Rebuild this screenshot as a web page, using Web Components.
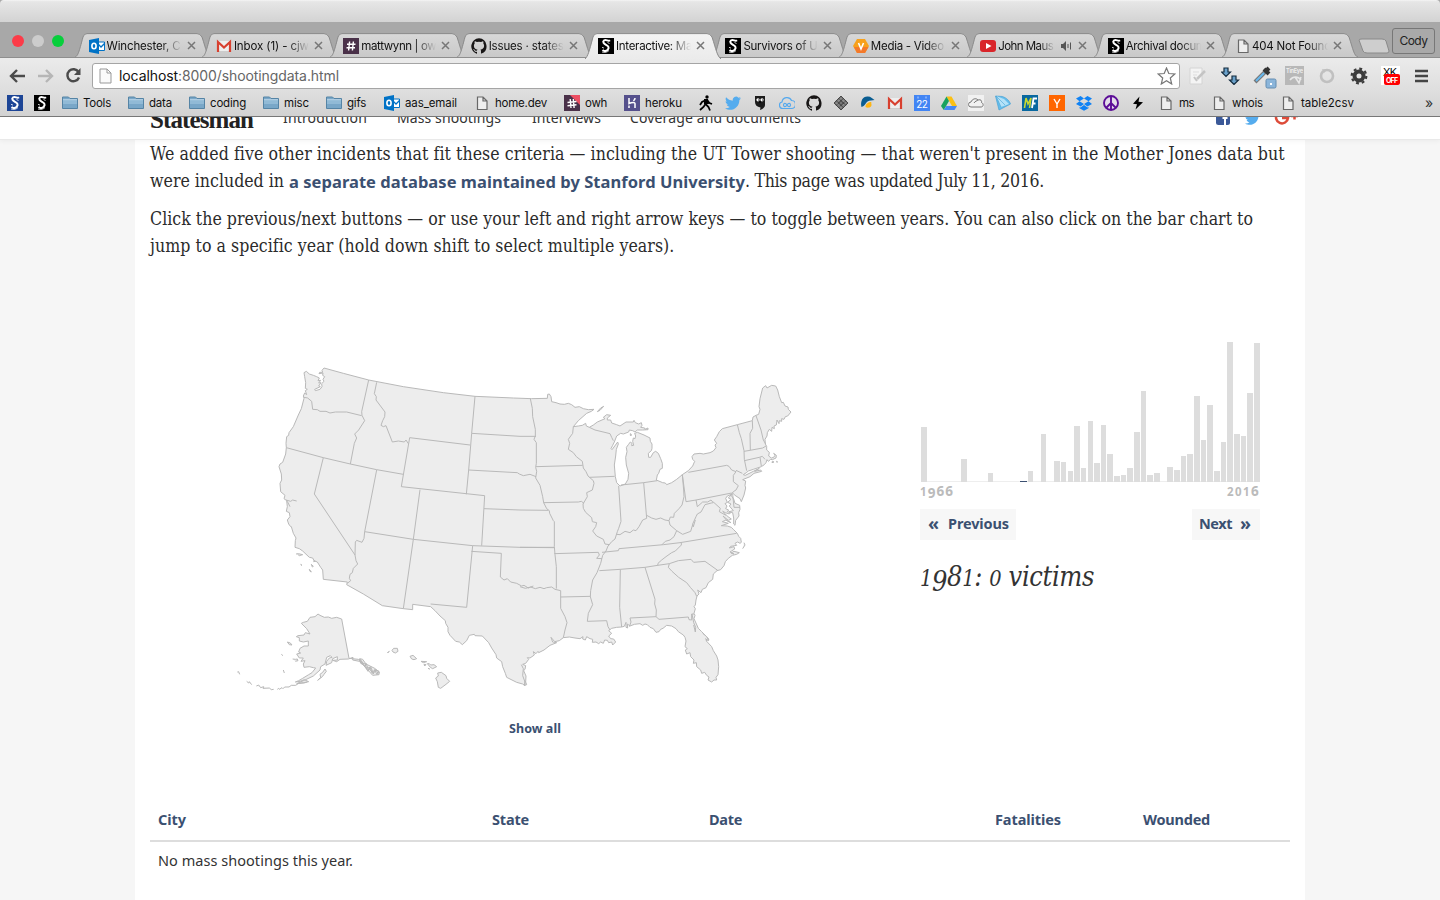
<!DOCTYPE html>
<html lang="en"><head><meta charset="utf-8"><title>Interactive: Mass shootings</title>
<style>
html,body{margin:0;height:100%}
body{display:flex;flex-direction:column;height:900px;overflow:hidden;background:#f6f6f6;font-family:Inter,"Liberation Sans",sans-serif}
</style></head><body>
<browser-chrome></browser-chrome>
<news-page></news-page>
<script>
const define=(name,css,html,after)=>customElements.define(name,class extends HTMLElement{
  connectedCallback(){
    if(this.shadowRoot)return;
    const r=this.attachShadow({mode:'open'});
    r.innerHTML='<style>'+css+'</style>'+(typeof html==='function'?html(this):html);
    if(after)after(this,r);
  }
});

/* Spreads its text over the width given in the w attribute. */
define('fit-text',':host{display:inline-block;white-space:pre;flex:none}','<slot></slot>',el=>{
  const w=+el.getAttribute('w'),n=el.textContent.length;
  const now=el.getBoundingClientRect().width;
  el.style.letterSpacing=((w-now)/n).toFixed(3)+'px';
});

const S='<path d="M12 2.300C10 4 8.500 1 6.200 2.300 4 4 6 5.800 8 6.800c2.700 1.300 3.300 3 1.800 4.900-1.400 1.700-3.700 1.500-5.300.3" fill="none" stroke="#fff" stroke-width="2"/><path d="M4 14c2.500.8 5.500.3 7-1.500M9.500 4.500l2 1M4 9.300l2 .8" fill="none" stroke="#fff" stroke-width=".8"/>';
const ICONS={
 sblack:'<path d="M0 0h16v16H0z"/>'+S,
 sblue:'<path fill="#1d4596" d="M0 0h16v16H0z"/>'+S,
 outlook:'<path fill="#fff" stroke="#0072c6" d="M8 4h7.5v8.5H8z"/><path d="M9 6l3 3 4-4" fill="none" stroke="#0072c6" stroke-width="1.3"/><path fill="#0072c6" d="M0 2l10-2v16L0 14z"/><ellipse cx="5" cy="8" rx="2.1" ry="2.8" fill="none" stroke="#fff" stroke-width="1.6"/>',
 gmail:'<path fill="#eee" d="M1 3h14v11H1z"/><path d="M1 13.5h14" stroke="#ccc"/><path fill="none" stroke="#d8402f" stroke-width="2.2" d="M2 14V4l6 5.5L14 4v10"/>',
 slack:'<path fill="#4a3149" d="M0 0h16v16H0z"/><path d="M6.6 3.5l-1 9M10.4 3.5l-1 9M4 6.3h8.5M3.5 9.8H12" stroke="#fff" stroke-width="1.4"/>',
 owh:'<path fill="#4a3149" d="M0 0h16v16H0z"/><path fill="#ed4f63" d="M6 0h10v10z"/><path d="M6.2 4l.8 9M9.3 4l.8 9M3.5 7.5l9-1M3.5 10.8l9-1" stroke="#fff" stroke-width="1.4"/>',
 github:'<path fill="#181616" d="M8 .2a8 8 0 0 0-2.5 15.5c.4.1.5-.2.5-.4v-1.5c-2.200.5-2.700-1-2.700-1-.4-.9-.9-1.200-.9-1.200-.7-.5.1-.5.1-.5.8.1 1.200.8 1.200.8.7 1.200 1.900.9 2.300.7.1-.5.300-.9.500-1.100-1.800-.2-3.600-.9-3.600-4 0-.9.300-1.600.8-2.100-.1-.2-.4-1 .1-2.100 0 0 .7-.2 2.200.8a7.500 7.500 0 0 1 4 0c1.500-1 2.200-.8 2.200-.8.4 1.100.2 1.900.1 2.100.5.6.8 1.300.8 2.100 0 3.100-1.900 3.800-3.700 4 .3.3.6.8.6 1.500v2.200c0 .2.1.5.5.4A8 8 0 0 0 8 .2z"/>',
 hex:'<path fill="#f7a11b" d="M4 1h8l4 7-4 7H4L0 8z"/><path fill="#f4792a" d="M1 9h14.500L12 15H4z"/><path d="M5.500 5L8 11l2.500-6" fill="none" stroke="#fff" stroke-width="1.600"/>',
 youtube:'<rect y="2" width="16" height="12" rx="3" fill="#d9252a"/><path fill="#fff" d="M6 5l5.500 3L6 11z"/>',
 file:'<path fill="#eee" stroke="#686868" stroke-width="1.200" d="M3.500 2h5.500l4 4v8.500H3.500zM9 2v4h4"/>',
 folder:'<path fill="#79a7c8" stroke="#5584a5" d="M.5 4V2h6l1.500 1.500h7.500v10H.5z"/><path fill="#91bad6" d="M1 5h14v4H1z"/><path d="M1 4.700h14" stroke="#bad5e8"/>',
 heroku:'<path fill="#55508c" d="M0 0h16v16H0z"/><path d="M5 3v5.500c3-1.500 6-1.500 6 0V13M11 3c0 1.500-.8 2-1.500 3M5 10.500v2.500" fill="none" stroke="#fff" stroke-width="1.500"/>',
 walk:'<circle cx="9" cy="2" r="1.700"/><path d="M8 4.500L7.500 9l3 3 1.500 3.500M7.500 9L5.500 12 2 15M8 5L4 7 2 10M9 5l2.500 3L14 9" fill="none" stroke="#000" stroke-width="1.800"/><path d="M6 4h4l1 5H6z"/>',
 twitter:'<path fill="#55acee" d="M16 3.200c-.6.300-1.200.4-1.900.5.700-.4 1.200-1 1.400-1.800-.6.400-1.300.6-2.100.8a3.300 3.300 0 0 0-5.600 3C5.100 5.600 2.700 4.300 1.100 2.300c-.9 1.500-.4 3.400 1 4.400-.5 0-1-.2-1.500-.4 0 1.600 1.100 2.900 2.600 3.200-.5.100-1 .2-1.500.1.400 1.300 1.600 2.200 3.100 2.300A6.600 6.600 0 0 1 0 13.200c6.500 4.100 14.400-.4 14.400-8.300.6-.4 1.200-1 1.600-1.700z"/>',
 owl:'<path fill="#1c1c1c" d="M3 1h10v9c0 2-2 4-5 5l.5-2.500C5 12 3 10 3 7z"/><circle cx="6" cy="4.800" r="1.600" fill="#fff"/><circle cx="10" cy="4.800" r="1.600" fill="#fff"/><path d="M6 5h.8M10 5h.8M8 6v2" stroke="#000" stroke-width="1.200"/>',
 cloudblue:'<path fill="none" stroke="#55a9ee" stroke-width="1.200" d="M4 13.500a3.300 3.300 0 0 1-1-6.500 5 5 0 0 1 9.500-1.500 4 4 0 0 1 0 8zM8 10c-1.500-2.500-3.500-1.800-3.500 0s2 2.500 3.500 0 3.500-1.800 3.500 0-2 2.500-3.500 0z"/>',
 grid:'<path fill="#777" stroke="#333" stroke-width=".8" d="M8 1l7 7-7 7-7-7zM5.700 3.400l7 7M3.400 5.700l7 7M10.300 3.400l-7 7M12.700 5.700l-7 7"/><path d="M8 3.500L12.500 8 8 12.500 3.500 8z" fill="none" stroke="#ccc" stroke-width=".8" stroke-dasharray="1 1"/>',
 bird:'<path fill="#0a5d91" d="M1.500 12C0 6 3 1 8 1.500c3 0 4 2 6.500 3.500-2 .5-5 0-7 1.500S5 11 1.500 12z"/><path fill="#fdb515" d="M5.500 12c0-3 2.500-5 6-5-1 1 1 2.500-.5 4.500-1.500 1.500-4 1.500-5.500.5z"/>',
 cal:'<path fill="#4285f4" d="M0 0h16v16H0z"/><path d="M4 1.500v2M12 1.500v2" stroke="#bcd3fb"/><text x="8" y="13" font-size="10" text-anchor="middle" fill="#fff" font-family="Roboto">22</text>',
 drive:'<path fill="#fbc013" d="M5.500 1.500h5L16 11h-5z"/><path fill="#19a15f" d="M5.500 1.500L8 6l-5.200 9L0 11z"/><path fill="#4688f4" d="M5.300 11H16l-2.500 4H2.800z"/>',
 cloudgrey:'<path fill="#f1f1f1" d="M0 0h16v16H0z"/><path fill="none" stroke="#777" d="M3 12a2.500 2.500 0 0 1 0-5c1-3 5-4.500 7-2 3-1 4 1 3.500 2.500C16 8.500 15.500 12 13 12zM6 8c1-2 3-2 4-3"/>',
 gem:'<path fill="#65bdeb" stroke="#49a2d4" stroke-width=".7" d="M.500 1l7 .5C12 3 14.500 6 15.500 9L4 15z"/><path fill="#b4e2f8" d="M1 1l8 3 5 5-8 3z"/><path d="M1 1l5 11M1 1l9 9" stroke="#49a2d4" stroke-width=".6"/>',
 mf:'<path fill="#0868a0" d="M0 0h16v16H0z"/><path d="M2.500 13L4 3l2 6 3-6-1.500 10" fill="none" stroke="#c8d830" stroke-width="1.600"/><path d="M10 13l1.500-9.500H15M10.500 8.500h3" fill="none" stroke="#fff" stroke-width="1.800"/>',
 y:'<path fill="#f60" d="M0 0h16v16H0z"/><path d="M5 4l3 5 3-5M8 8.500V13" fill="none" stroke="#fff" stroke-width="1.400"/>',
 dropbox:'<path fill="#0f82f5" d="M4.600 1L8 3.500 3.500 6.300 0 3.600zM11.400 1L8 3.500l4.500 2.800L16 3.600zM0 9l3.500-2.700L8 9.100l-3.400 2.500zM16 9l-3.500-2.700L8 9.100l3.400 2.500zM8 10l3.500 2.600 1-.6v1.200L8 15.800l-4.500-2.600V12l1 .6z"/>',
 peace:'<circle cx="8" cy="8" r="7" fill="#e4dcea" stroke="#5c0d97" stroke-width="1.900"/><path d="M8 1v14M8 8l-5 5M8 8l5 5" stroke="#5c0d97" stroke-width="1.900"/>',
 bolt:'<path d="M9.500 1.500L3 8.800l4 .4-1.500 5.300L13 7.200l-4.500-.4z"/>',
 fb:'<rect x="1" width="14" height="15" rx="2.500" fill="#3b5998"/><path d="M10 15V5.500C10 3.500 11 3 13 3.200M7.500 8h5" fill="none" stroke="#fff" stroke-width="2"/>'
};
const icon=(n,w=16)=>'<svg width="'+w+'" height="'+w+'" viewBox="0 0 16 16">'+ICONS[n]+'</svg>';

define('tab-item',`:host{display:block;width:127.4px;height:25px;flex:none;position:relative;font-size:11.500px;color:#111}
 .shape{position:absolute;left:0;top:0}
 .in{position:relative;display:flex;align-items:center;height:25px;padding-left:13.500px}
 .in svg{flex:none}.t{width:75px;margin-left:2px;overflow:hidden;white-space:nowrap;-webkit-mask-image:linear-gradient(90deg,#000 72%,transparent)}
 .x{margin-left:5px}`,
 el=>{const a=el.hasAttribute('active'),snd=el.hasAttribute('sound'),f=el.getAttribute('icon')==='file';
 return `<svg class="shape" width="140" height="26"><defs><linearGradient id="g" x2="0" y2="1"><stop stop-color="${a?'#f3f3f3':'#d8d8d8'}"/><stop offset="1" stop-color="${a?'#ebebeb':'#c9c9c9'}"/></linearGradient></defs><path d="M0 ${a?26:24}C3 23 4 19 8 4Q9 .6 12 .6H122Q125 .6 127 4C131 16 132 23 136 ${a?26:24}" fill="url(#g)" stroke="#8a8a8a"/></svg>
 <div class="in">${icon(el.getAttribute('icon'))}<div class="t" style="${f?'margin-left:1px;width:76px':''}${snd?'width:57px':''}"><fit-text w="${el.getAttribute('w')}">${el.getAttribute('label')}</fit-text></div>
 ${snd?'<svg style="margin-left:6px" width="11" height="10"><path d="M0 3h2l3-3v10L2 7H0z" fill="#555"/><path d="M7 3v4M9.500 1.500v7" stroke="#555"/></svg>':''}
 <svg class="x" style="${snd?'margin-left:6px':''}" width="9" height="9"><path d="M1 1l7 7M8 1L1 8" stroke="#777" stroke-width="1.500"/></svg></div>`});

define('book-mark',':host{display:flex;align-items:center;flex:none;font-size:11.500px;color:#111}svg{flex:none}fit-text{margin-left:5px}',
 el=>{const l=el.getAttribute('label');return icon(el.getAttribute('icon'))+(l?`<fit-text w="${el.getAttribute('w')}">${l}</fit-text>`:'')},
 el=>{el.style.width=el.getAttribute('slotw')+'px'});

const TABS=[['outlook','Winchester, C',74],['gmail','Inbox (1) - cjw',75],['slack','mattwynn | ow',75],['github','Issues · states',75],['sblack','Interactive: Ma',76],['sblack','Survivors of U',74],['hex','Media - Video',73],['youtube','John Maus',55],['sblack','Archival docum',80],['file','404 Not Found',79]];
const MARKS=[[7,'sblue'],[34,'sblack'],[62,'folder','Tools',28],[128,'folder','data',23],[189,'folder','coding',36],[263,'folder','misc',25],[326,'folder','gifs',19],[384,'outlook','aas_email',52],[474,'file','home.dev',52],[564,'owh','owh',22],[624,'heroku','heroku',37],[698,'walk'],[725,'twitter'],[752,'owl'],[779,'cloudblue'],[806,'github'],[833,'grid'],[860,'bird'],[887,'gmail'],[914,'cal'],[941,'drive'],[968,'cloudgrey'],[995,'gem'],[1022,'mf'],[1049,'y'],[1076,'dropbox'],[1103,'peace'],[1130,'bolt'],[1158,'file','ms',15],[1211,'file','whois',31],[1280,'file','table2csv',53],[1425]];

define('browser-chrome',`:host{display:block;height:117px;flex:none;box-sizing:border-box;border-bottom:1px solid #777;background:#a8a8a8}
 .title{height:22px;border-radius:4px 4px 0 0;background:linear-gradient(#f5f5f5,#e6e6e6 8%,#d3d3d3)}
 .tabs{display:flex;height:36px;box-sizing:border-box;padding:11px 0 0 12px;border-bottom:1px solid #8e8e8e}
 .tabs tab-item[active]{z-index:2}
 .lights{width:63px;display:flex;gap:8px;padding-top:2px}.lights i{width:12px;height:12px;border-radius:50%}
 .new{margin:5px 0 0 9px;flex:none}
 .cody{margin:-5px 0 0 2px;width:41px;height:24px;border:1px solid #777;border-radius:3px;background:#a9a9a9;font:12px/24px Inter;text-align:center;color:#222;flex:none}
 .tools{display:flex;height:33px;align-items:center;background:linear-gradient(#ebebeb,#dedede);padding:2px 0 0 9px;box-sizing:border-box}
 .url{width:1086px;height:24px;margin-left:10px;border:1px solid #a5a5a5;border-radius:3px;background:#fff;display:flex;align-items:center;font-size:14px;color:#666;flex:none}
 .url svg{margin-left:5px}.url .u{margin-left:5px;flex:1}.url b{font-weight:400;color:#111}.star{margin-right:3px}
 .ext{display:flex;align-items:center;gap:12px;margin-left:9px;height:25px}
 .marks{display:flex;height:25px;align-items:center;padding:0 0 2px 7px;box-sizing:border-box;background:linear-gradient(#dedede,#d2d2d2)}
 svg{flex:none}.more{font-size:14px;color:#333}`,
 ()=>`<div class="title"></div>
 <div class="tabs"><div class="lights"><i style="background:#fc3b48"></i><i style="background:#ccc"></i><i style="background:#07cf3b"></i></div>
 ${TABS.map((t,i)=>`<tab-item icon="${t[0]}" label="${t[1]}" w="${t[2]}" ${i===4?'active':''} ${i===7?'sound':''}></tab-item>`).join('')}
 <svg class="new" width="32" height="16"><path d="M1 2Q1 1 4 1h20q3 0 4 2l3 10q0 2-2 2H9q-3 0-4-2z" fill="#cecece" stroke="#8a8a8a"/></svg><div class="cody"><fit-text w="28">Cody</fit-text></div></div>
 <div class="tools">
 <svg width="17" height="14"><path d="M16 7H2M8 1L2 7l6 6" fill="none" stroke="#4b4b4b" stroke-width="2.400"/></svg>
 <svg style="margin-left:12px" width="16" height="14"><path d="M0 7h14M8 1l6 6-6 6" fill="none" stroke="#b6b6b6" stroke-width="2.400"/></svg>
 <svg style="margin-left:11px" width="17" height="17"><path d="M13.500 5A6 6 0 1 0 14 10.500" fill="none" stroke="#4b4b4b" stroke-width="2.400"/><path d="M15.500 1v7H9z" fill="#4b4b4b"/></svg>
 <div class="url"><svg width="16" height="18" viewBox="0 0 16 18"><path d="M2 2h7l4 4v10H2zM9 2v4h4" fill="#fafafa" stroke="#999"/></svg><span class="u"><fit-text w="220"><b>localhost</b>:8000/shootingdata.html</fit-text></span>
 <svg class="star" width="19" height="18"><path d="M9.500 1l2.300 5.500 6 .5-4.500 4 1.400 6-5.200-3.300L4.300 17l1.400-6-4.500-4 6-.5z" fill="#fff" stroke="#777" stroke-width="1.200"/></svg></div>
 <div class="ext">
 <svg width="18" height="18"><path d="M1 1h12v16H1z" fill="#f4f4f4" stroke="#d4d4d4"/><path d="M4 5h6M4 8h4" stroke="#ddd"/><path d="M8 12l8-8" stroke="#c4c4c4" stroke-width="2.500"/><path d="M5 10l3 4" stroke="#c4c4c4" stroke-width="2"/></svg>
 <svg width="20" height="18" style="margin-left:2px"><path d="M3 1h4v4h2.500L5 9.500.5 5H3zM11 9h4v4h2.500L13 17.500 8.500 13H11z" fill="#6aa1ca" stroke="#152c3f" stroke-width="1.200"/></svg>
 <svg width="24" height="24" viewBox="0 0 24 24" style="margin:5px 0 0 0"><path d="M2 16L12 6" stroke="#777" stroke-width="4"/><path d="M3 15l8-8" stroke="#67b8ee" stroke-width="2"/><path d="M11 3l5 5M12 6l4-4" stroke="#333" stroke-width="4"/><rect x="13" y="13" width="10" height="9" rx="1.500" fill="#8bb5da" stroke="#648db1"/><path d="M17 17h2v2h-2z" fill="#fff"/></svg>
 <svg width="19" height="19" style="margin-left:-4px"><path fill="#b8b8b8" d="M0 0h19v19H0z"/><text x="1" y="7" font-size="5.500" textLength="17" font-weight="bold" fill="#eee">TinEye</text><path d="M5 14c3-4 8-4 11 0M10 11l4 6 2-6" fill="none" stroke="#e8e8e8" stroke-width="1.500"/></svg>
 <svg width="18" height="18" style="margin-left:2px"><circle cx="9" cy="9" r="6" fill="none" stroke="#c0c0c0" stroke-width="2.600"/><path d="M4 2l5 1-3 3z" fill="#c0c0c0"/></svg>
 <svg width="18" height="18" style="margin-left:2px"><circle cx="9" cy="9" r="4.500" fill="none" stroke="#3b3b3b" stroke-width="4"/><circle cx="9" cy="9" r="7.300" fill="none" stroke="#3b3b3b" stroke-width="2.200" stroke-dasharray="2.870 2.870"/></svg>
 <svg width="20" height="19" style="margin-left:1px"><path fill="#fff" d="M0 0h19v19H0z"/><text x="2" y="10" font-size="11" font-family="Liberation Sans" textLength="14">XK</text><rect x="3" y="8" width="16" height="11" rx="2" fill="red"/><text x="5" y="16.500" font-size="7" font-weight="bold" fill="#fff" textLength="12">OFF</text></svg>
 <svg width="13" height="14" style="margin-left:2px"><path d="M0 2h13M0 7h13M0 12h13" stroke="#444" stroke-width="2.600"/></svg>
 </div></div>
 <div class="marks">${MARKS.slice(0,-1).map((m,i)=>`<book-mark icon="${m[1]}" label="${m[2]||''}" w="${m[3]||0}" slotw="${MARKS[i+1][0]-m[0]}"></book-mark>`).join('')}<span class="more">»</span></div>`);

/* Map geometry, in thirds of a pixel. Each piece is [x offset, y offset, points]. */
const COAST=[
[0,0,'229,64 238,72 250,76 260,80 268,84 264,92 272,91 266,99 273,98 266,108 271,110 254,118 256,122 270,118 276,110 275,101 282,94 279,88 284,80 278,76 279,69 267,71 269,67 278,67 276,61 282,54 340,70 416,90 520,110 640,128 735,139 850,144'],
[870,0,'34,146 82,145 83,133 88,132 93,140 95,155 108,158 120,162 133,163 145,160 155,164 165,172 178,170 190,176 205,179 222,178 214,184 200,190 175,212 160,230 175,228 187,226 197,220 199,228 208,232 220,225 232,216 255,206 250,202 260,194 272,196 262,204 262,210 272,210 275,219 290,224 300,228 318,216 340,216 342,211 346,218 356,222 364,218 366,226 362,232 374,234 375,238 384,234 384,239 368,240 352,240 345,246 338,242 328,240 326,246 310,252 302,250 290,258 283,276 278,286 273,296 276,299 282,291 293,276 295,282 289,298 287,318 283,345 286,380 290,398 300,408 316,402 324,388 326,370 319,345 317,322 321,305 319,292 325,284 331,276 336,280 335,287 341,286 338,274 340,264 345,266 347,258 344,250 352,247 372,255 390,264 391,274 396,282 396,295 394,302 385,310 386,322 392,322 400,308 407,304 415,310 422,326 427,340 427,355 420,358 416,370 412,375 409,390 428,398 436,399 440,404 455,398 470,388 487,374 505,362 518,348 524,334 518,328 516,320 522,312 540,310 550,312 570,308 580,303 588,293 585,285 590,280 583,270 590,260 598,245 607,236 652,224 697,212 699,201 708,196 716,193 720,178 717,170 720,146 728,114 737,107 741,114 755,106 767,108 773,120 778,140 785,158 790,157 795,168 804,171 805,178 813,186 803,198 796,200 792,208 785,206 785,214 778,212 777,221 771,210 769,225 762,228 763,236 756,232 755,244 748,238 742,248 741,258 735,268 736,282 740,289 740,300 748,307 746,318 754,324 761,322 765,316 761,310 769,316 768,324 757,329 752,328 745,334 741,329 738,338 733,344 724,350 700,358 685,363 679,368 670,374 676,376 700,364 718,355 704,364 722,360 725,364 702,370 690,380 668,389 677,393 675,406 677,414 672,435 664,455 660,446 645,436 638,429 632,434 641,447 645,460 659,466 660,478 656,488 657,498 647,511 645,526 641,522 641,504 638,488 627,485 640,482 628,468 633,462 623,457 633,448 625,444 635,433 622,438 617,445 622,457 615,461 621,468 617,476 626,480 622,485 632,488 628,492 616,488 608,484 624,500 634,507 625,511 609,498 622,513'],
[870,510,'633,8 618,0 607,5 625,10 604,17 622,18 634,22 640,28 652,40 656,49 662,55 664,67 660,70 653,66 645,70 650,76 632,79 628,84 642,80 644,87 630,96 642,102 633,99 642,94 658,98 650,103 637,106 625,115 616,125 612,137 602,149 591,152 580,162 578,178 565,188 558,203 547,208 543,218 533,210 537,222 531,228 528,240 526,255 522,260 526,266 522,280 525,286 522,296 535,325 545,335 560,350 567,358 558,362 575,380 580,392 590,408 594,420 596,440 594,464 588,472 590,480 582,480 575,486 564,480 567,471 560,466 554,457 545,460 542,450 530,440 529,428 520,430 522,420 512,410 510,398 500,402 496,390 502,386 495,380 498,363 495,352 490,345 475,335 468,326 455,318 440,316 429,325 422,328 417,335 408,337 400,326 390,322 382,314 375,312 368,316 360,311 343,313 330,318 322,312 323,324 318,322 318,307 313,319 305,321 290,322 275,325 266,332 275,340 266,348 272,356 281,357 287,366 278,375 275,366 266,368 262,361 254,360 250,370 242,366 236,371 228,366 217,367 218,358 210,356 200,350 196,360 188,357 189,350 180,356 165,354 148,351 130,353 118,362 104,365 93,352 98,366 110,368 90,376 72,390 56,398 54,394 48,401 40,395 43,405 30,414 22,413 26,418 17,430 8,433 17,437 15,448 11,452 18,468 17,486 20,494 13,496'],
[0,510,'885,484 885,497 878,492 860,487 830,472 826,460 818,440 815,425 800,414 798,404 785,384 776,368 757,348 735,347 733,343 718,346 710,362 697,374 688,366 677,364 660,346 654,335 654,322 647,310 646,302 630,288 615,272 602,260 548,253 548,269 520,266 457,257 400,222 350,194 352,186 280,178 278,150 272,142 262,126 252,122 248,114 238,112 218,93 208,86 195,82 196,62 198,54 190,40 184,20'],
[0,0,'182,530 176,522 172,510 180,500 178,488 169,484 172,470 170,452 162,446 165,436 152,425 150,400 155,390 154,372 147,350 150,342 158,337 167,312 169,293 168,280 170,260 176,256 177,248 190,230 205,195 214,176 222,145 220,138 224,129 230,134 226,122 232,118 226,115 227,98 224,80 222,68']];
const BORDERS=[
[0,0,'416,90 395,185 396,196 404,212 386,240 374,252 380,264 373,280 361,342'],
[0,0,'222,142 233,144 245,154 248,178 262,179 270,184 288,184 300,189 316,186 350,186 395,197'],
[0,0,'440,97 433,131 439,140 438,150 447,162 465,186 464,200 458,212 453,226 460,230 468,227 473,240 480,258 487,276 505,273 523,276 528,270 535,281'],
[0,0,'169,293 280,323 361,342 440,359 520,373'],
[0,0,'539,263 720,285'],[0,0,'539,263 514,410 764,437 755,587'],
[0,0,'735,139 725,250 716,360 709,433'],[0,0,'725,250 870,259 918,259'],
[0,0,'716,360 862,368 868,372 880,377 900,373 918,380'],
[0,0,'280,323 253,432 305,510 375,615'],
[0,0,'168,450 182,454 188,450 200,453'],[0,0,'172,454 180,470'],
[0,0,'440,360 404,545 402,565 396,577 380,571 376,576 375,615 378,632 383,642 370,655 367,668 360,673 358,685 362,692 352,700'],
[0,0,'570,419 550,568 520,776'],
[0,0,'404,545 550,568 728,587 870,592 972,593'],
[0,0,'762,476 870,480 955,481'],
[0,0,'728,587 710,772 602,762'],[0,0,'724,604 814,610 811,681 822,690 832,686 842,696 860,700 875,708 882,706 895,714 910,708'],
[870,0,'31,146 37,175 38,200 46,238 46,258 42,268 49,278 49,340 47,352 50,364 47,384 60,406 68,440 71,458 80,476 88,482 89,490 100,512 103,515 103,590 105,614 109,650 109,716'],
[870,0,'48,350 188,346'],[870,0,'70,458 175,456 184,454 192,460'],
[870,0,'160,230 158,250 145,268 149,280 145,298 160,308 169,320 187,334 190,354 198,365 204,378 220,392 222,400 217,420 200,428 202,440 189,462 190,475 197,487 215,503 217,515 230,518 227,530 218,543 230,558 250,568 255,582 268,584 264,588 258,603 248,616 242,640 231,668 218,690 212,722 211,740 218,764 205,790 202,814 260,812 264,830 270,840'],
[870,0,'208,382 284,379'],[870,0,'208,232 225,240 258,248 270,251 275,262 280,272'],
[870,0,'296,408 303,514 296,535 292,545 285,567 275,575 266,586'],
[870,0,'303,405 371,398 412,392'],[870,0,'371,398 380,505 368,510 357,530 348,542 340,540 330,548 315,544 300,554 290,553'],
[870,0,'380,496 395,504 408,508 422,504 435,510 447,512 451,501 461,502 463,490 477,476 486,465 492,440 491,420 487,374'],
[870,0,'487,374 498,455 528,450 635,429'],
[870,0,'505,367 620,346 627,349 635,360 648,365 640,376 640,395 655,407 648,420 640,425 634,434'],
[870,0,'648,361 667,370'],[870,0,'652,224 658,248 664,266 672,302 673,328 680,362'],
[870,0,'697,212 698,235 690,250 691,300'],[870,0,'708,197 723,240 730,270 737,282'],
[870,0,'672,304 690,301 728,294 738,288'],[870,0,'673,332 718,322 727,319 735,328'],[870,0,'720,322 724,348'],
[870,0,'528,450 532,470 548,456 563,456 573,450 580,458 574,459 555,464 543,486 532,492 528,500 518,522 520,530'],
[870,0,'580,456 601,475 598,485 618,496'],[870,0,'638,432 642,472 660,472'],
[870,510,'0,82 103,82'],[870,510,'0,200 16,205 32,201 46,206 60,202 72,206 80,203 95,201 105,208 122,212 122,265 135,290 141,308 135,330 130,353'],
[870,510,'103,101 235,97 238,105 230,115 246,116'],[870,510,'122,231 212,229'],
[870,510,'246,97 295,92 297,86 430,74 480,68 650,40'],
[870,510,'447,2 450,15 470,32 462,50 450,60 436,64 426,74'],[870,510,'470,32 488,43 512,34 518,14 520,20 526,0'],
[870,510,'238,152 301,148 375,142 413,136 448,131 475,122 513,118 521,127 555,124 593,151'],
[870,510,'484,67 484,75 466,93 455,98 438,110 425,120 414,130 413,137'],
[870,510,'301,148 299,262 305,321'],[870,510,'375,142 405,238 404,252 409,270 408,290 330,294 333,306 328,320'],
[870,510,'408,290 417,298 505,291 507,299 515,300 515,282 522,282'],
[870,510,'448,131 445,142 456,154 476,172 500,188 511,202 525,218 530,229'],
[870,510,'516,282 521,308 527,322 526,336 521,315'],
[870,510,'4,434 10,446 8,467 15,486']];
const ISLES=[
[870,0,'232,185 242,174 251,169 240,181 232,185'],[870,0,'331,251 334,253 333,258 331,256 331,251'],[870,0,'757,334 762,336 756,338 757,334'],[870,0,'770,334 773,336 769,336 770,334'],
[870,510,'672,68 675,75 668,86'],[870,510,'548,340 560,350 566,362 555,356'],
[0,510,'198,102 205,101 218,104 208,107 203,103'],[0,510,'212,133 216,136 212,134'],[0,510,'244,133 250,139 247,141 244,133'],[0,510,'238,148 244,156 240,154 238,148'],[0,510,'250,120 256,124 250,125'],
[0,510,'335,297 320,292 305,295 295,291 283,292 270,286 264,282 255,290 240,292 232,304 220,307 214,310 230,326 240,342 226,338 222,345 204,347 199,350 208,353 208,363 220,366 235,363 235,378 222,378 210,385 206,396 212,399 200,402 208,414 220,414 213,424 225,422 220,432 222,442 238,440 250,443 257,444 246,458 236,464 218,475 206,482 196,486 210,484 223,479 236,485 220,488 200,491 225,480 250,468 270,450 272,440 285,432 290,412 301,407 306,412 298,414 290,424 288,436 305,428 308,416 322,410 322,420 308,421 320,425 330,418 355,417 369,412 368,420 388,424 400,434 412,448 428,466 447,464 448,456 434,445 420,438 408,432 398,418 389,416 400,430 385,418 357,415 335,297'],
[0,510,'388,417 396,432 404,430 410,445 420,442 426,458 434,450 441,464 447,454 434,448 430,462 418,446 414,454 401,435 392,430 388,417'],
[0,510,'392,422 404,440 408,430 416,450 422,440 430,460 438,450 444,460'],
[0,510,'263,481 272,472 270,463 278,457 285,447 289,454 282,463 277,470 263,481'],
[0,510,'172,366 178,374 186,375 181,369 172,366'],[0,510,'154,403 159,407'],[0,510,'188,417 196,418 202,417 204,422 196,424'],[0,510,'160,450 163,459'],
[0,510,'22,456 26,455 29,463'],[0,510,'50,484 56,489 58,485 65,494'],[0,510,'79,498 86,495 92,503 101,500 99,505 118,504 124,509 131,508'],
[0,510,'142,508 146,505 148,508 156,503 159,506 164,501 177,501 184,496 197,496 206,490 222,489 232,486'],
[0,510,'472,398 478,394 473,399'],[0,510,'486,391 491,385 502,385 504,394 496,399 489,396 486,391'],[0,510,'540,409 549,406 560,416 552,419 545,417 540,409'],
[0,510,'573,424 590,425 580,428 573,424'],[0,510,'582,433 588,434 584,438 582,433'],[0,510,'592,431 598,431 602,435 612,434 620,440 608,446 601,442 598,438 592,431'],[0,510,'594,445 599,447 594,445'],
[0,510,'623,459 634,457 648,467 650,475 659,484 648,493 632,505 625,502 622,485 617,474 625,468 623,459']];
const pts=([ox,oy,s])=>s.split(' ').map(p=>{const[a,b]=p.split(',');return(+a+ox)+' '+(+b+oy)}).join('L');
define('us-map',':host{display:block;width:580px;height:350px}svg{display:block}',
 ()=>`<svg width="580" height="350" viewBox="0 0 1740 1050" stroke="#b9b9b9" stroke-width="3" stroke-linejoin="round"><path fill="#ededed" d="M${COAST.map(pts).join('L')}Z"/><path fill="none" d="${BORDERS.map(s=>'M'+pts(s)).join('')}"/><path fill="#ededed" d="${ISLES.map(s=>'M'+pts(s)).join('')}"/></svg>`);

const BARS={0:55,6:23,10:9,16:11,18:48,20:21,21:20,22:11,23:56,24:14,25:61,26:19,27:57,28:28,29:6,30:7,31:14,32:50,33:91,34:7,35:9,37:15,38:12,39:26,40:28,41:86,42:42,43:77,44:11,45:40,46:140,47:48,48:46,49:89,50:139};
define('year-chart',':host{display:block}svg{display:block}.y{display:flex;justify-content:space-between;font:bold 13.500px/19px "Noto Sans";color:#bbb}i{font-style:normal;font-size:.85em}u{text-decoration:none;position:relative;top:2px}',
 ()=>`<svg width="340" height="141" shape-rendering="crispEdges"><path fill="#eee" d="M1 140h339v1H1z"/>${Object.entries(BARS).map(([i,h])=>{const x=Math.round(1+i*6.66),r=Math.round(1+i*6.66+5.6);return`<rect x="${x}" y="${141-h}" width="${r-x}" height="${h}" fill="#ddd"/>`}).join('')}<path fill="#3b5071" d="M100 140h7v1h-7z"/></svg><div class="y"><fit-text w="34"><i>1</i><u>9</u>66</fit-text><fit-text w="33"><i>201</i>6</fit-text></div>`);

define('nav-button',':host{display:flex;box-sizing:border-box;height:31px;padding:0 0 3px 8px;align-items:center;background:#f7f7f7;color:#3b5071;font:bold 14.500px "Noto Sans"}','<slot></slot>');

define('site-header',`:host{display:block;height:23px;overflow:hidden;background:#fff;border-bottom:1px solid #e9e9e9;box-shadow:0 1px 5px rgba(0,0,0,.05);box-sizing:border-box;flex:none;position:relative}
 .row{display:flex;align-items:center;height:24px;margin:-11px 0 0 150px;font:14px/24px "Noto Sans";color:#333}
 .logo{font:bold 25px/28px "Liberation Serif";color:#222;width:133px;padding-top:3px}.a{width:114px}.b{width:135px}.c{width:98px}.d{width:585px}
 svg{margin-right:14px;flex:none}`,
 ()=>`<div class="row"><div class="logo"><fit-text w="103">Statesman</fit-text></div><div class="a"><fit-text w="84">Introduction</fit-text></div><div class="b"><fit-text w="104">Mass shootings</fit-text></div><div class="c"><fit-text w="69">Interviews</fit-text></div><div class="d"><fit-text w="171">Coverage and documents</fit-text></div>${icon('fb')}${icon('twitter',15)}<svg width="24" height="16" viewBox="0 0 24 16"><path d="M13 4A6 6 0 1 0 14 8H8M17 6h7M20.500 2.500v7" fill="none" stroke="#dd4b39" stroke-width="2.500"/></svg></div>`);

define('incident-table',`:host{display:block;width:1140px;color:#333;font:14.500px/20px "Noto Sans"}
 .h{display:grid;grid-template-columns:334px 217px 286px 148px 1fr;justify-items:start;padding:0 0 11px 8px;border-bottom:2px solid #ddd;font-weight:bold;color:#3b5071}
 .r{padding:8px}`,
 `<div class="h"><fit-text w="28">City</fit-text><fit-text w="37">State</fit-text><fit-text w="33">Date</fit-text><fit-text w="66">Fatalities</fit-text><fit-text w="67">Wounded</fit-text></div><div class="r"><fit-text w="195">No mass shootings this year.</fit-text></div>`);

define('news-page',`:host{display:flex;flex-direction:column;height:783px;overflow:hidden}
 main{width:1170px;margin:0 auto;flex:1;background:#fff;box-sizing:border-box;padding:1px 15px 0;color:#2b2b2b}
 p{margin:0 0 11px;font:17.600px/27px "DejaVu Serif Condensed","DejaVu Serif",serif;font-stretch:condensed;height:54px}
 p fit-text{height:27px;vertical-align:top}
 a{display:inline-block;height:27px;vertical-align:top;color:#3b5071;font:bold 16.500px/27px "Noto Sans"}
 .viz{display:flex;height:538px}
 .left{width:770px;padding:79px 0 0 80px;box-sizing:border-box;flex:none}
 .all{margin:-8px 0 0 279px;font:bold 12.500px/20px "Noto Sans";color:#3b5071;padding-top:27px}
 .right{width:340px;padding-top:70px}
 .btns{display:flex;justify-content:space-between;margin-top:8px}
 h2{margin:19px 0 0;font:italic 27px/36px "DejaVu Serif Condensed","DejaVu Serif",serif;font-stretch:condensed;color:#333}
 h2 i{font-size:.8em}h2 u{text-decoration:none;position:relative;top:5px}
 .ar{margin-right:8px}`,
 `<site-header></site-header><main></main>`,
 (el,r)=>{
  r.querySelector('main').innerHTML=`
 <p><fit-text w="1134">We added five other incidents that fit these criteria — including the UT Tower shooting — that weren't present in the Mother Jones data but</fit-text><br><fit-text w="139">were included in </fit-text><a><fit-text w="456">a separate database maintained by Stanford University</fit-text></a><fit-text w="299">. This page was updated July 11, 2016.</fit-text></p>
 <p><fit-text w="1103">Click the previous/next buttons — or use your left and right arrow keys — to toggle between years. You can also click on the bar chart to</fit-text><br><fit-text w="524">jump to a specific year (hold down shift to select multiple years).</fit-text></p>
 <section class="viz"><div class="left"><us-map></us-map><div class="all"><fit-text w="52">Show all</fit-text></div></div>
 <div class="right"><year-chart></year-chart><div class="btns"><nav-button style="width:96px"><fit-text w="12" class="ar" style="font-size:18px">«</fit-text><fit-text w="61">Previous</fit-text></nav-button><nav-button style="width:68px;padding-left:7px"><fit-text w="33" class="ar">Next</fit-text><fit-text w="12" style="font-size:18px">»</fit-text></nav-button></div><h2><fit-text w="174"><i>1</i><u>9</u>8<i>1</i>: <i>0</i> victims</fit-text></h2></div></section>
 <incident-table></incident-table>`;
 });
</script>
</body></html>
